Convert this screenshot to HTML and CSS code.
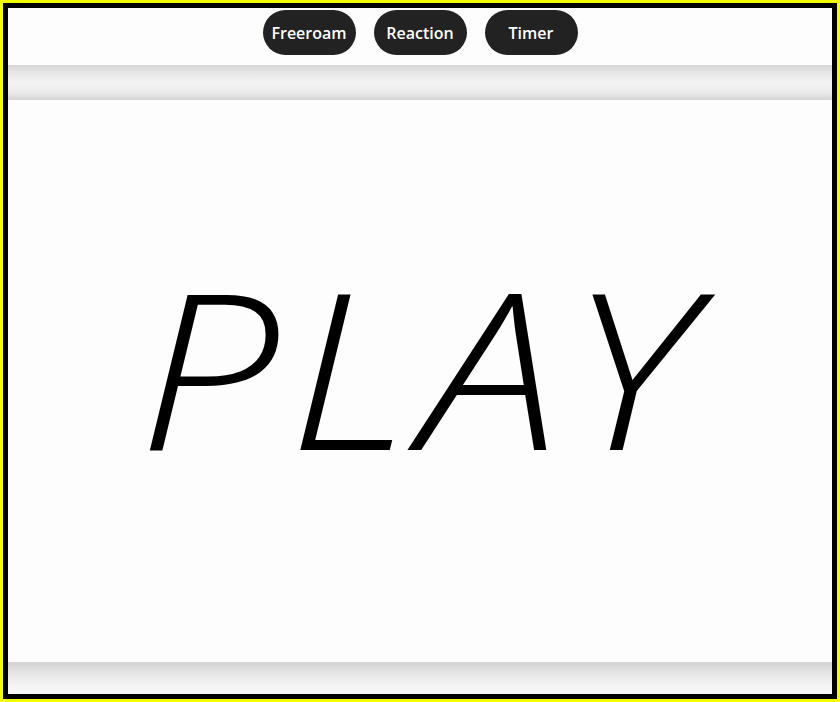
FILE: index.html
```html
<!DOCTYPE html>
<html>
<head>
<meta charset="utf-8">
<link rel="stylesheet" href="styles.css">
</head>
<body>
<div class="frame">
  <div class="screen">
    <header class="modes">
      <button class="mode">Freeroam</button>
      <button class="mode">Reaction</button>
      <button class="mode">Timer</button>
    </header>
    <div class="rail"></div>
    <main class="stage">
      <span class="play">PLAY</span>
    </main>
    <div class="rail rail-bottom"></div>
  </div>
</div>
</body>
</html>
```

FILE: styles.css
```css
html, body {
  margin: 0;
  padding: 0;
  height: 100%;
}
body {
  background: #ffff00;
}
.frame {
  box-sizing: border-box;
  height: 702px;
  width: 840px;
  border: 3px solid #f2ff00;
}
.screen {
  box-sizing: border-box;
  height: 100%;
  border: 5px solid #000;
  background: #fdfdfd;
  display: flex;
  flex-direction: column;
}
.modes {
  height: 57px;
  display: flex;
  justify-content: center;
  align-items: flex-start;
  gap: 18px;
  padding-top: 2px;
  box-sizing: border-box;
}
.mode {
  width: 93px;
  height: 45px;
  border: none;
  border-radius: 23px;
  background: #222222;
  color: #ffffff;
  font-family: "Open Sans", "Liberation Sans", sans-serif;
  font-size: 16px;
  font-weight: 600;
  padding: 0;
}
.rail {
  height: 35px;
  background: linear-gradient(#d5d5d5, #e9e9e9 25%, #f3f3f3 50%, #ebebeb 80%, #d3d3d3);
}
.stage {
  flex: 1;
  display: flex;
  align-items: center;
  justify-content: center;
}
.play {
  display: inline-block;
  font-family: "Open Sans", "Liberation Sans", sans-serif;
  font-style: italic;
  font-weight: 300;
  font-size: 217px;
  line-height: 1;
  color: #000;
  letter-spacing: 9px;
  margin-right: 0;
  margin-top: -30px;
  transform: scaleX(1.15);
}
.rail-bottom {
  height: 32px;
  background: linear-gradient(#d1d1d1, #e6e6e6 35%, #f3f3f3 70%, #f8f8f8);
}
```
